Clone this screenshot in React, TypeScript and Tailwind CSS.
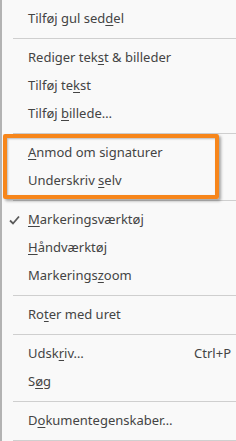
import React from 'react';

type Item = { pre: string; key?: string; post?: string; shortcut?: string; checked?: boolean } | 'sep';

const items: Item[] = [
  { pre: 'Tilføj gul sed', key: 'd', post: 'el' },
  'sep',
  { pre: 'Rediger tek', key: 's', post: 't & billeder' },
  { pre: 'Tilføj te', key: 'k', post: 'st' },
  { pre: 'Tilføj ', key: 'b', post: 'illede…' },
  'sep',
  { pre: '', key: 'A', post: 'nmod om signaturer' },
  { pre: 'Underskriv ', key: 's', post: 'elv' },
  'sep',
  { pre: '', key: 'M', post: 'arkeringsværktøj', checked: true },
  { pre: '', key: 'H', post: 'åndværktøj' },
  { pre: 'Markerings', key: 'z', post: 'oom' },
  'sep',
  { pre: 'Ro', key: 't', post: 'er med uret' },
  'sep',
  { pre: 'Udsk', key: 'r', post: 'iv…', shortcut: 'Ctrl+P' },
  { pre: 'S', key: 'ø', post: 'g' },
  'sep',
  { pre: 'D', key: 'o', post: 'kumentegenskaber…' },
  'sep',
];

const Check = () => (
  <svg width="11" height="10" viewBox="0 0 11 10" className="absolute left-[7px] top-[9px]">
    <path d="M1 5.5 L4 8.5 L10 1.5" fill="none" stroke="#5a5a5a" strokeWidth="1.8" />
  </svg>
);

export default function App() {
  return (
    <div
      className="relative w-[236px] h-[441px] overflow-hidden bg-[#f9f9f9] border-l-2 border-[#b3b3b3] pt-[5px] text-[13px] text-[#444444]"
      style={{ fontFamily: '"Segoe UI", "Noto Sans", sans-serif' }}
    >
      {items.map((it, i) =>
        it === 'sep' ? (
          <div key={i} className="h-[11px] flex items-center pl-[11px]">
            <div className="h-px w-full bg-[#cfcfcf]" />
          </div>
        ) : (
          <div key={i} className="relative h-[28px] flex items-center pl-[26px] pr-[5px]">
            {it.checked && <Check />}
            <span className="flex-1 whitespace-nowrap">
              {it.pre}
              <span className="underline underline-offset-2">{it.key}</span>
              {it.post}
            </span>
            {it.shortcut && <span className="whitespace-nowrap">{it.shortcut}</span>}
          </div>
        )
      )}
      {/* orange highlight annotation */}
      <div className="absolute left-[1px] top-[134px] w-[216px] h-[65px] rounded-[2px] border-[4px] border-[#f7861b] shadow-[2px_2px_3px_rgba(0,0,0,0.35),inset_1px_1px_2px_rgba(0,0,0,0.25)]" />
    </div>
  );
}
